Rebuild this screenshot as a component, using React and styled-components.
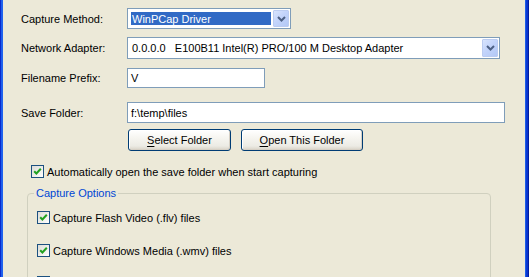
import React from "react";
import styled, { createGlobalStyle } from "styled-components";

const GlobalStyle = createGlobalStyle`
  html, body { margin: 0; padding: 0; background: #ECE9D8; }
  body { font-family: "Liberation Sans", Arial, sans-serif; font-size: 11px; color: #000; }
  * { box-sizing: border-box; }
`;

const Window = styled.div`
  display: flex;
  width: 529px;
  height: 277px;
  overflow: hidden;
  background: #ECE9D8;
`;

const FrameEdge = styled.div`
  flex: none;
  width: ${(p) => p.$w}px;
  background: ${(p) =>
    p.$side === "left"
      ? "linear-gradient(to right, #0A2ACB 0%, #0A2ACB 33%, #1D5DEB 34%, #2163EE 100%)"
      : "linear-gradient(to right, #1B5CE6 0%, #1B5CE6 25%, #0B3BD8 26%, #0832C8 75%, #001C9E 76%)"};
`;

const Content = styled.div`
  flex: 1;
  display: flex;
  flex-direction: column;
  padding-left: 18px;
`;

const FieldRow = styled.div`
  flex: none;
  display: flex;
  align-items: center;
  height: ${(p) => p.$h}px;
  margin-top: ${(p) => p.$mt}px;
`;

const Label = styled.div`
  flex: none;
  width: 106px;
  white-space: nowrap;
`;

const Combo = styled.div`
  flex: none;
  display: flex;
  align-items: stretch;
  width: ${(p) => p.$w}px;
  height: 100%;
  padding: 1px;
  border: 1px solid #7F9DB9;
  background: #fff;
`;

const ComboValue = styled.div`
  flex: 1;
  display: flex;
  align-items: center;
  margin: 2px;
  padding-left: 1px;
  white-space: pre;
  overflow: hidden;
  background: ${(p) => (p.$selected ? "#316AC5" : "transparent")};
  color: ${(p) => (p.$selected ? "#fff" : "#000")};
`;

const DropButton = styled.div`
  flex: none;
  width: 16px;
  display: flex;
  align-items: center;
  justify-content: center;
  border: 1px solid #BBCCF1;
  border-radius: 1px;
  background: linear-gradient(135deg, #D8E4FD 0%, #C3D4FB 45%, #B3C8F5 100%);
`;

const TextBox = styled.div`
  flex: none;
  display: flex;
  align-items: center;
  width: ${(p) => p.$w}px;
  height: 100%;
  padding-left: 3px;
  border: 1px solid #7F9DB9;
  background: #fff;
  white-space: pre;
`;

const ButtonRow = styled.div`
  flex: none;
  display: flex;
  gap: 10px;
  height: 22px;
  margin-top: 6px;
  padding-left: 107px;
`;

const XpButton = styled.div`
  flex: none;
  display: flex;
  align-items: center;
  justify-content: center;
  width: ${(p) => p.$w}px;
  height: 22px;
  border: 1px solid #003C74;
  border-radius: 3px;
  background: linear-gradient(to bottom, #FFFFFF 0%, #F6F5F0 40%, #ECEBE4 80%, #D8D2C6 100%);
  box-shadow: inset -1px -1px 0 #D6D0C5, inset 1px 1px 0 #FFFFFF;
  white-space: pre;
  u { text-decoration: underline; text-underline-offset: 2px; }
`;

const CheckRow = styled.div`
  flex: none;
  display: flex;
  align-items: center;
  gap: 3px;
  height: 13px;
  margin-top: ${(p) => p.$mt}px;
  margin-left: ${(p) => p.$ml}px;
  white-space: nowrap;
`;

const Box = styled.div`
  flex: none;
  width: 13px;
  height: 13px;
  border: 1px solid #1C5180;
  background: linear-gradient(135deg, #DCDCD7 0%, #F4F4F1 70%, #FFFFFF 100%);
  display: flex;
  align-items: center;
  justify-content: center;
`;

const Group = styled.div`
  position: relative;
  flex: none;
  width: 464px;
  height: 140px;
  margin-top: 15px;
  margin-left: 6px;
  padding: 17px 0 0 9px;
  border: 1px solid #D0D0BF;
  border-radius: 4px;
  display: flex;
  flex-direction: column;
`;

const Legend = styled.div`
  position: absolute;
  top: -7px;
  left: 6px;
  padding: 0 2px;
  height: 13px;
  line-height: 13px;
  background: #ECE9D8;
  color: #0046D5;
  white-space: nowrap;
`;

const Chevron = () => (
  <svg width="9" height="6" viewBox="0 0 9 6">
    <polyline points="1,1 4.5,4.5 8,1" fill="none" stroke="#4D6185" strokeWidth="2" />
  </svg>
);

const Check = () => (
  <svg width="9" height="9" viewBox="0 0 9 9">
    <polyline points="1.2,4.2 3.4,6.5 7.8,1.8" fill="none" stroke="#21A121" strokeWidth="2" />
  </svg>
);

const CheckItem = ({ children, mt, ml }) => (
  <CheckRow $mt={mt} $ml={ml}>
    <Box>
      <Check />
    </Box>
    {children ? <span>{children}</span> : null}
  </CheckRow>
);

export default function App() {
  return (
    <>
      <GlobalStyle />
      <Window>
        <FrameEdge $side="left" $w={3} />
        <Content>
          <FieldRow $h={21} $mt={8}>
            <Label>Capture Method:</Label>
            <Combo $w={164}>
              <ComboValue $selected>WinPCap Driver</ComboValue>
              <DropButton>
                <Chevron />
              </DropButton>
            </Combo>
          </FieldRow>
          <FieldRow $h={22} $mt={8}>
            <Label>Network Adapter:</Label>
            <Combo $w={373}>
              <ComboValue>{"0.0.0.0   E100B11 Intel(R) PRO/100 M Desktop Adapter"}</ComboValue>
              <DropButton>
                <Chevron />
              </DropButton>
            </Combo>
          </FieldRow>
          <FieldRow $h={20} $mt={9}>
            <Label>Filename Prefix:</Label>
            <TextBox $w={138}>V</TextBox>
          </FieldRow>
          <FieldRow $h={21} $mt={14}>
            <Label>Save Folder:</Label>
            <TextBox $w={378}>{"f:\\temp\\files"}</TextBox>
          </FieldRow>
          <ButtonRow>
            <XpButton $w={103}>
              <span><u>S</u>elect Folder</span>
            </XpButton>
            <XpButton $w={122}>
              <span><u>O</u>pen This Folder</span>
            </XpButton>
          </ButtonRow>
          <CheckItem mt={14} ml={10}>
            Automatically open the save folder when start capturing
          </CheckItem>
          <Group>
            <Legend>Capture Options</Legend>
            <CheckItem mt={0} ml={0}>Capture Flash Video (.flv) files</CheckItem>
            <CheckItem mt={20} ml={0}>Capture Windows Media (.wmv) files</CheckItem>
            <CheckItem mt={19} ml={0} />
          </Group>
        </Content>
        <FrameEdge $side="right" $w={4} />
      </Window>
    </>
  );
}
